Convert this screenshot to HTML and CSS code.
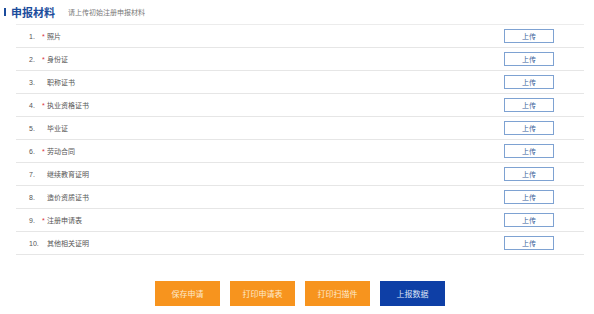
FILE: index.html
```html
<!DOCTYPE html>
<html lang="zh-CN">
<head>
  <meta charset="UTF-8" />
  <title>申报材料</title>
  <link rel="stylesheet" href="styles.css">
</head>
<body>
  <div class="head">
    <span class="bar"></span>
    <h1>申报材料</h1>
    <span class="tip">请上传初始注册申报材料</span>
  </div>

  <div class="wrap">
    <ul class="list">
      <li><span class="no">1.</span><span class="req">*</span><span class="name">照片</span><button class="up">上传</button></li>
      <li><span class="no">2.</span><span class="req">*</span><span class="name">身份证</span><button class="up">上传</button></li>
      <li><span class="no">3.</span><span class="req"></span><span class="name">职称证书</span><button class="up">上传</button></li>
      <li><span class="no">4.</span><span class="req">*</span><span class="name">执业资格证书</span><button class="up">上传</button></li>
      <li><span class="no">5.</span><span class="req"></span><span class="name">毕业证</span><button class="up">上传</button></li>
      <li><span class="no">6.</span><span class="req">*</span><span class="name">劳动合同</span><button class="up">上传</button></li>
      <li><span class="no">7.</span><span class="req"></span><span class="name">继续教育证明</span><button class="up">上传</button></li>
      <li><span class="no">8.</span><span class="req"></span><span class="name">造价资质证书</span><button class="up">上传</button></li>
      <li><span class="no">9.</span><span class="req">*</span><span class="name">注册申请表</span><button class="up">上传</button></li>
      <li><span class="no">10.</span><span class="req"></span><span class="name">其他相关证明</span><button class="up">上传</button></li>
    </ul>

    <div class="actions">
      <button class="btn orange">保存申请</button>
      <button class="btn orange">打印申请表</button>
      <button class="btn orange">打印扫描件</button>
      <button class="btn blue">上报数据</button>
    </div>
  </div>
</body>
</html>
```

FILE: styles.css
```css
body {
  margin: 0;
  background: #fff;
  font-family: "Liberation Sans", "Noto Sans CJK SC", sans-serif;
  color: #555;
}
.head {
  display: flex;
  align-items: center;
  height: 24px;
  padding-left: 4px;
}
.bar {
  width: 2px;
  height: 8px;
  background: #1b4c9c;
}
.head h1 {
  margin: 0 0 0 5px;
  font-size: 11px;
  font-weight: bold;
  color: #1b4c9c;
}
.tip {
  margin-left: 13px;
  font-size: 7px;
  color: #777;
}
.wrap {
  margin: 0 10px 0 16px;
}
.list {
  list-style: none;
  margin: 0;
  padding: 0;
  border-top: 1px solid #ececec;
}
.list li {
  display: flex;
  align-items: center;
  height: 22px;
  padding: 0 30px 0 13px;
  border-bottom: 1px solid #e6e6e6;
  font-size: 7px;
}
.no {
  width: 13px;
}
.req {
  width: 5px;
  color: #d9303a;
}
.name {
  flex: 1;
}
.up {
  width: 50px;
  height: 14px;
  padding: 0;
  border: 1px solid #7ea2d2;
  background: #fff;
  color: #3b5f9a;
  font-family: inherit;
  font-size: 7px;
}
.actions {
  display: flex;
  justify-content: center;
  gap: 10px;
  margin-top: 26px;
}
.btn {
  width: 65px;
  height: 25px;
  padding: 0;
  border: none;
  font-family: inherit;
  font-size: 8px;
}
.orange {
  background: #f7941e;
  color: #fde9cc;
}
.blue {
  background: #0e3fa6;
  color: #dfe6f6;
}
```
